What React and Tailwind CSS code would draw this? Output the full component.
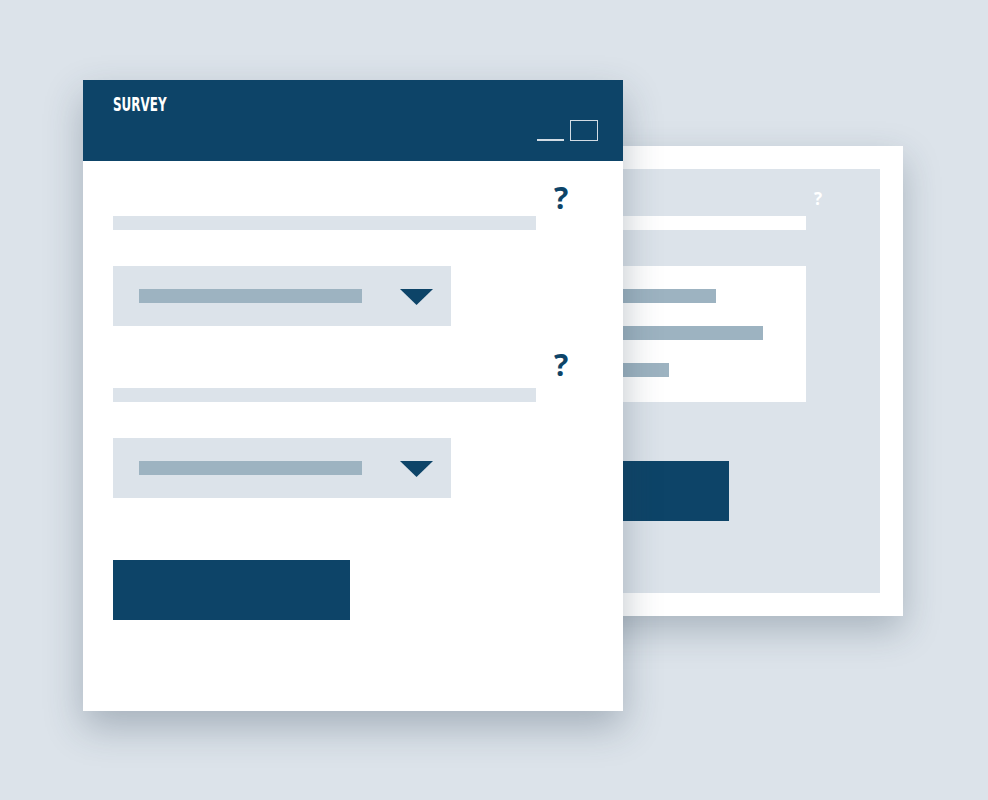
import React from 'react';

const DARK = 'bg-[#0d4468]';

function Triangle() {
  return (
    <svg width="33" height="16" viewBox="0 0 33 16" className="shrink-0">
      <polygon points="0,0 33,0 16.5,16" fill="#0d4468" />
    </svg>
  );
}

function SelectBox() {
  return (
    <div className="flex h-[60px] w-[338px] items-center bg-[#dce3ea] pl-[26px]">
      <div className="h-[14px] w-[223px] bg-[#9db3c1]" />
      <div className="ml-[38px] mt-[2px]">
        <Triangle />
      </div>
    </div>
  );
}

function Question({ className }) {
  return (
    <div
      className={`ml-[441px] h-[30px] text-[30px] font-bold leading-none text-[#0d4468] ${className}`}
      style={{ fontFamily: '"Open Sans", "DejaVu Sans", sans-serif' }}
    >
      ?
    </div>
  );
}

function BackWindow() {
  return (
    <div className="absolute left-[380px] top-[146px] h-[470px] w-[523px] bg-white p-[23px] shadow-[0_14px_34px_rgba(40,60,80,0.28)]">
      <div className="flex h-full flex-col bg-[#dce3ea] pl-[110px]">
        <div
          className="ml-[301px] mt-[21px] h-[17px] text-[17px] font-bold leading-none text-white"
          style={{ fontFamily: '"Open Sans", "DejaVu Sans", sans-serif' }}
        >
          ?
        </div>
        <div className="mt-[9px] h-[14px] w-[293px] bg-white" />
        <div className="mt-[36px] flex h-[136px] w-[293px] flex-col gap-[23px] bg-white pl-[27px] pt-[23px]">
          <div className="h-[14px] w-[176px] bg-[#9db3c1]" />
          <div className="h-[14px] w-[223px] bg-[#9db3c1]" />
          <div className="h-[14px] w-[129px] bg-[#9db3c1]" />
        </div>
        <div className={`mt-[59px] h-[60px] w-[216px] ${DARK}`} />
      </div>
    </div>
  );
}

function FrontWindow() {
  return (
    <div className="absolute left-[83px] top-[80px] flex h-[631px] w-[540px] flex-col bg-white shadow-[0_16px_36px_rgba(40,60,80,0.3)]">
      <div className={`flex h-[81px] items-start justify-between pl-[30px] pr-[25px] ${DARK}`}>
        <div
          className="origin-left scale-x-[0.7] pt-[15px] text-[19px] font-bold leading-none text-white"
          style={{ fontFamily: '"Liberation Sans Narrow", "DejaVu Sans Condensed", "Liberation Sans", sans-serif' }}
        >
          SURVEY
        </div>
        <div className="mt-[40px] flex items-end gap-[6px]">
          <div className="mb-[0.5px] h-[1.5px] w-[27px] bg-[#d2dce4]" />
          <div className="h-[21px] w-[28px] border-[1.5px] border-[#d2dce4]" />
        </div>
      </div>
      <div className="flex flex-col pl-[30px] pt-[22px]">
        <Question />
        <div className="mt-[3px] h-[14px] w-[423px] bg-[#dce3ea]" />
        <div className="mt-[36px]">
          <SelectBox />
        </div>
        <Question className="mt-[24px]" />
        <div className="mt-[8px] h-[14px] w-[423px] bg-[#dce3ea]" />
        <div className="mt-[36px]">
          <SelectBox />
        </div>
        <div className={`mt-[62px] h-[60px] w-[237px] ${DARK}`} />
      </div>
    </div>
  );
}

export default function App() {
  return (
    <div className="relative h-[800px] w-[988px] overflow-hidden bg-[#dce3ea]">
      <BackWindow />
      <FrontWindow />
    </div>
  );
}
